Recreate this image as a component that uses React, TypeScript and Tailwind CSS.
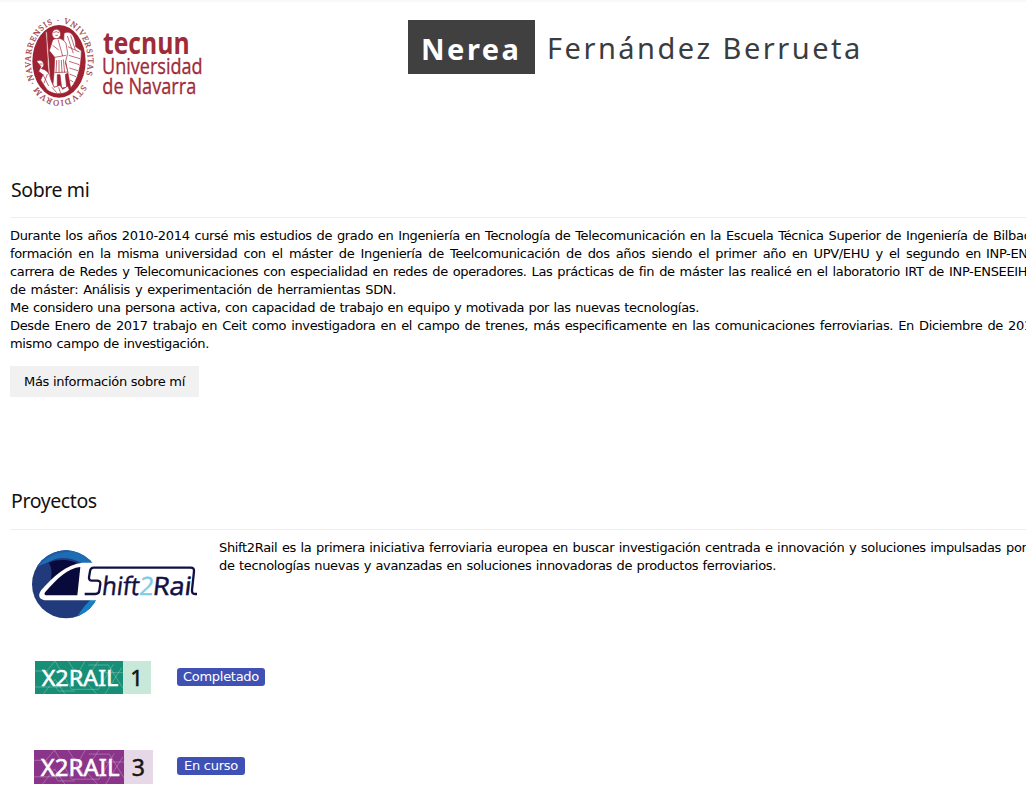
import React from 'react';

function Line({ w, text, tail }: { w: string; text: string; tail?: string }) {
  return (
    <div className="flex h-[18px] whitespace-nowrap">
      <span className={'block shrink-0 whitespace-normal h-[18px] [text-align-last:justify] ' + w}>{text}</span>
      {tail && <span className="ml-[5px]">{tail}</span>}
    </div>
  );
}

function Seal() {
  return (
    <svg className="block h-[120px] w-[210px] shrink-0" viewBox="0 0 630 360">
      <defs>
        <path id="ringText" d="M72 239.5 A86 116 0 1 1 224 239.5 A86 116 0 0 1 72 239.5" />
      </defs>
      <ellipse cx="147" cy="184" rx="80" ry="109" fill="#9f2233" />
      <text fill="#9c3a47" stroke="#9c3a47" strokeWidth=".6" fontSize="25" letterSpacing="0" fontFamily="Liberation Serif, serif">
        <textPath href="#ringText" textLength="634" lengthAdjust="spacing">NAVARRENSIS · VNIVERSITAS · STVDIORVM ·</textPath>
      </text>
      <g fill="#fff" stroke="#9f2233" strokeWidth="2">
        <path d="M162 100 C180 88 198 108 197 140 L214 152 C214 195 204 240 182 264 L173 215 L160 150 Z" />
        <path d="M128 120 C142 110 160 116 168 130 L173 160 L166 188 L174 218 L166 224 L170 262 L155 264 L150 224 L142 224 L142 260 L128 262 L132 218 L134 172 L118 152 Z" />
        <ellipse cx="139" cy="102" rx="13" ry="14" />
        <path d="M107 95 L111 95 L122 248 L117 248 Z" />
        <path d="M80 184 C90 176 104 185 101 198 L94 206 C110 208 120 222 122 238 L132 262 L150 256 L158 268 L174 258 L178 270 C160 287 126 284 110 268 L92 240 L99 224 L86 214 L93 200 Z" />
      </g>
      <path d="M134 172 L168 166 M144 118 L158 168 M140 180 L138 218 M147 180 L147 218 M154 180 L156 218 M160 178 L164 218 M134 218 L172 216 M172 108 L190 160 M182 106 L196 150 M174 140 L208 156 M176 166 L210 176 M177 184 L208 194 M178 204 L204 212 M178 222 L198 230 M180 240 L190 246 M98 222 L116 258 M112 222 L102 250 M126 262 L140 278 M146 262 L152 280 M88 192 L98 192 M128 136 L146 150 M130 98 Q138 92 148 98 M136 106 H144" fill="none" stroke="#9f2233" strokeWidth="2" />
      <g fill="#9f2b38" letterSpacing="0" fontFamily="Open Sans, sans-serif">
        <text x="279" y="163" fontSize="92" fontWeight="700" textLength="260" lengthAdjust="spacingAndGlyphs">tecnun</text>
        <text x="276" y="223" fontSize="68" textLength="302" lengthAdjust="spacingAndGlyphs" stroke="#9f2b38" strokeWidth="1">Universidad</text>
        <text x="277" y="282" fontSize="68" textLength="282" lengthAdjust="spacingAndGlyphs" stroke="#9f2b38" strokeWidth="1">de Navarra</text>
      </g>
    </svg>
  );
}

function Shift2Rail() {
  return (
    <svg className="block h-[100px] w-[200px] shrink-0" viewBox="0 0 600 300">
      <defs>
        <clipPath id="disc"><circle cx="138" cy="163" r="102" /></clipPath>
      </defs>
      <g clipPath="url(#disc)">
        <rect x="30" y="55" width="215" height="215" fill="#213a7c" />
        <path d="M50 110 L86 96 C120 76 165 82 200 112 L250 120 V50 H50Z" fill="#1d6db5" />
        <path d="M30 140 C60 90 110 60 160 66 L120 50 H30Z" fill="#2458a4" />
        <path d="M86 98 C120 84 165 90 190 110 L92 155 C96 130 96 112 86 98Z" fill="#080a3c" />
        <path d="M225 200 C200 215 180 245 166 268 L245 268Z" fill="#1680c4" />
      </g>
      <path d="M250 98 H188 C140 102 98 140 64 180 C50 198 60 211 80 211 H250Z" fill="#fff" />
      <path d="M181 111 C144 114 112 145 76 186 C71 193 74 196 82 196 H172 Z" fill="#080a3c" />
      <path d="M194 192 H226 Q237 192 238 182 L241 162 Q242 152 231 152 H216 Q206 151 207 142 L210 124 Q211 113 222 113 H512 Q523 113 522 124 L516 180 Q515 192 525 192 H531" fill="none" stroke="#101044" strokeWidth="7" />
      <g transform="translate(0 195) skewX(-7)" letterSpacing="0" fontFamily="Open Sans, sans-serif" fontSize="76" fill="#101044" stroke="#101044" strokeWidth="1.5">
        <text x="244" y="0" textLength="112" lengthAdjust="spacingAndGlyphs">hift</text>
        <text x="356" y="0" textLength="42" lengthAdjust="spacingAndGlyphs" fill="#80cbe5" stroke="#80cbe5">2</text>
        <text x="396" y="0" textLength="116" lengthAdjust="spacingAndGlyphs">Rai</text>
      </g>
    </svg>
  );
}

function X2Rail({ n, main, light, size }: { n: string; main: string; light: string; size: string }) {
  return (
    <svg className={'block ' + size} viewBox="0 0 348 99" preserveAspectRatio="none">
      <rect width="264" height="99" fill={main} />
      <rect x="264" width="84" height="99" fill={light} />
      <path d="M0 30 H35 L60 0 M25 99 L60 55 L90 99 M60 0 L110 85 H190 L235 10 M100 0 L150 80 M150 0 L110 70 M190 0 L150 60 L185 99 M210 99 L260 20 M0 78 H80 M200 35 H264 M35 30 L70 90 H120 M160 12 H220 L264 82" stroke="#fff" strokeOpacity=".3" strokeWidth="2.5" fill="none" />
      <g fontFamily="Noto Sans, sans-serif" fontSize="67" letterSpacing="0">
        <text x="20" y="75" fill="#fff" stroke="#fff" strokeWidth="1.5" textLength="230" lengthAdjust="spacingAndGlyphs">X2RAIL</text>
        <text x="286" y="75" fill="#151515" stroke="#151515" strokeWidth="1.5" textLength="39">{n}</text>
      </g>
    </svg>
  );
}

export default function App() {
  return (
    <div className="h-[810px] w-full overflow-hidden bg-white font-['DejaVu_Sans',Verdana,sans-serif] text-[13px] leading-[18px] tracking-[-0.28px] text-black">
      <div className="h-[3px] bg-gradient-to-b from-[#f6f6f6] to-white" />
      <header className="-mt-[3px] flex h-[170px] items-start pl-[10px]">
        <Seal />
        <h1 className="ml-[188px] mt-5 flex h-[54px] items-center whitespace-nowrap font-['Noto_Sans',sans-serif] text-[29px] leading-[54px] text-[#3a3d40]">
          <b className="block h-[54px] w-[127px] bg-[#404040] pl-[13px] pt-[2px] tracking-[2.5px] text-white">Nerea</b>
          <span className="ml-3 pt-[2px] tracking-[2.5px]">Fernández Berrueta</span>
        </h1>
      </header>
      <section className="pl-[10px]">
        <h2 className="h-[48px] border-b border-[#eee] pl-px font-['Noto_Sans',sans-serif] text-[19.5px] leading-[40px] tracking-[-0.4px] text-[#111]">Sobre mi</h2>
        <div className="pt-[9px] tracking-[-0.34px]">
          <Line w="w-[978px]" text="Durante los años 2010-2014 cursé mis estudios de grado en Ingeniería en Tecnología de Telecomunicación en la Escuela Técnica Superior de Ingeniería de" tail="Bilbao," />
          <Line w="w-[971px]" text="formación en la misma universidad con el máster de Ingeniería de Teelcomunicación de dos años siendo el primer año en UPV/EHU y el segundo en" tail="INP-ENSEEIHT" />
          <Line w="w-[934px]" text="carrera de Redes y Telecomunicaciones con especialidad en redes de operadores. Las prácticas de fin de máster las realicé en el laboratorio IRT de" tail="INP-ENSEEIHT" />
          <Line w="w-[386px]" text="de máster: Análisis y experimentación de herramientas SDN." />
          <Line w="w-[689px]" text="Me considero una persona activa, con capacidad de trabajo en equipo y motivada por las nuevas tecnologías." />
          <Line w="w-[993px]" text="Desde Enero de 2017 trabajo en Ceit como investigadora en el campo de trenes, más especificamente en las comunicaciones ferroviarias. En Diciembre de" tail="2018" />
          <Line w="w-[199px]" text="mismo campo de investigación." />
        </div>
        <button className="mt-[13px] block h-[31px] w-[189px] whitespace-nowrap bg-[#f1f1f1] text-center">Más información sobre mí</button>
      </section>
      <section className="mt-[84px] pl-[10px]">
        <h2 className="h-[49px] border-b border-[#eee] pl-px font-['Noto_Sans',sans-serif] text-[19.5px] leading-[40px] tracking-[-0.4px] text-[#111]">Proyectos</h2>
        <div className="flex h-[100px] pl-[10px]">
          <Shift2Rail />
          <div className="-ml-px shrink-0 pt-[9px] tracking-[-0.34px]">
            <Line w="w-[782px]" text="Shift2Rail es la primera iniciativa ferroviaria europea en buscar investigación centrada e innovación y soluciones impulsadas" tail="por" />
            <Line w="w-[557px]" text="de tecnologías nuevas y avanzadas en soluciones innovadoras de productos ferroviarios." />
          </div>
        </div>
        <div className="mt-[31px] flex h-[33px] items-center">
          <div className="w-[167px] pl-[25px]"><X2Rail n="1" main="#168f76" light="#c8e8da" size="h-[33px] w-[116px]" /></div>
          <span className="-mt-px h-[18px] w-[88px] rounded-[3px] bg-[#3f51b5] text-center text-white">Completado</span>
        </div>
        <div className="mt-[56px] flex h-[34px] items-center">
          <div className="w-[167px] pl-[24px]"><X2Rail n="3" main="#8a3589" light="#e7d8e8" size="h-[34px] w-[119px]" /></div>
          <span className="-mt-0.5 h-[18px] w-[68px] rounded-[3px] bg-[#3f51b5] text-center text-white">En curso</span>
        </div>
      </section>
    </div>
  );
}
